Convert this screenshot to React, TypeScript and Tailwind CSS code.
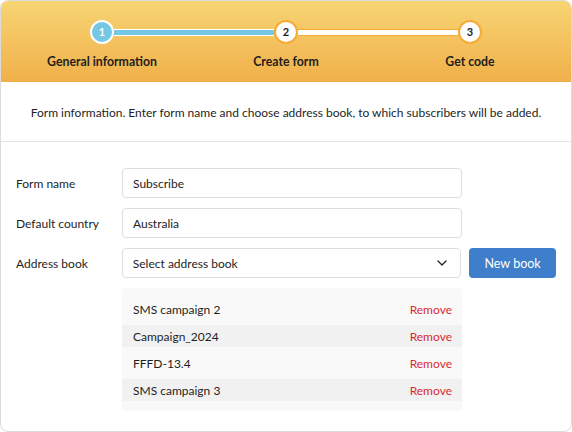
import React from "react";

function Step({ n, label, left, right, active }: { n: number; label: string; left?: "blue" | "white"; right?: "blue" | "white"; active?: boolean }) {
  const seg = (c?: "blue" | "white") =>
    c === "blue" ? (
      <div className="flex-1 h-[7px] bg-[#74c7e5] border-y-[1.5px] border-white" />
    ) : c === "white" ? (
      <div className="flex-1 h-[7px] bg-white border-y-[1.5px] border-[#f5ab37]" />
    ) : (
      <div className="flex-1" />
    );
  return (
    <div className="flex flex-col items-center">
      <div className="flex items-center w-full">
        {seg(left)}
        {active ? (
          <div className="w-[24px] h-[24px] rounded-full bg-[#74c7e5] border-2 border-white flex items-center justify-center text-white text-[11px] font-bold">
            {n}
          </div>
        ) : (
          <div className="w-[24px] h-[24px] rounded-full bg-white border-2 border-[#f5ab37] flex items-center justify-center text-[#222] text-[11px] font-bold">
            {n}
          </div>
        )}
        {seg(right)}
      </div>
      <div className="mt-[10px] text-[12.3px] leading-[16px] font-bold text-[#1e1e1e]">{label}</div>
    </div>
  );
}

const books = ["SMS campaign 2", "Campaign_2024", "FFFD-13.4", "SMS campaign 3"];

export default function App() {
  return (
    <div className="w-[572px] h-[432px] bg-white" style={{ fontFamily: "Lato, 'Liberation Sans', sans-serif" }}>
      <div className="w-full h-full border border-[#dcdcdc] rounded-[8px] overflow-hidden flex flex-col">
        <div className="h-[81px] bg-gradient-to-b from-[#f7d473] to-[#f0b049] grid grid-cols-3 px-[9px] pt-[19px]">
          <Step n={1} label="General information" right="blue" active />
          <Step n={2} label="Create form" left="blue" right="white" />
          <Step n={3} label="Get code" left="white" />
        </div>
        <div className="h-[60px] pt-[3px] flex items-center justify-center border-b border-[#e3e3e3] text-[12px] text-[#1e1e1e]">
          Form information. Enter form name and choose address book, to which subscribers will be added.
        </div>
        <div className="pt-[26px] px-[15px] flex flex-col gap-[10px] text-[12px] text-[#1e1e1e]">
          <div className="flex items-center">
            <div className="w-[106px] pt-[2px]">Form name</div>
            <div className="w-[340px] h-[30px] border border-[#dedede] rounded-[4px] flex items-center px-[10px] pt-[2px]">Subscribe</div>
          </div>
          <div className="flex items-center">
            <div className="w-[106px] pt-[2px]">Default country</div>
            <div className="w-[340px] h-[30px] border border-[#dedede] rounded-[4px] flex items-center px-[10px] pt-[2px]">Australia</div>
          </div>
          <div className="flex items-center">
            <div className="w-[106px] pt-[2px]">Address book</div>
            <div className="w-[340px] h-[30px] border border-[#dedede] rounded-[4px] flex items-center justify-between pl-[10px] pr-[13px]">
              <span className="pt-[2px]">Select address book</span>
              <svg width="10" height="6" viewBox="0 0 10 6" fill="none" stroke="#222" strokeWidth="1.3" strokeLinecap="round" strokeLinejoin="round">
                <polyline points="1,1 5,5 9,1" />
              </svg>
            </div>
            <div className="ml-[8px] w-[87px] h-[30px] pt-[2px] rounded-[4px] bg-[#3e7ecb] text-white flex items-center justify-center text-[12.5px]">New book</div>
          </div>
          <div className="ml-[106px] w-[340px] bg-[#f9f9f9] rounded-[4px] py-[10px] flex flex-col gap-[5px]">
            {books.map((b, i) => (
              <div key={b} className={`h-[22px] pt-[2px] flex items-center justify-between pl-[11px] pr-[10px] ${i % 2 === 1 ? "bg-[#f1f1f1]" : ""}`}>
                <span>{b}</span>
                <span className="text-[#d92b32]">Remove</span>
              </div>
            ))}
          </div>
        </div>
      </div>
    </div>
  );
}
